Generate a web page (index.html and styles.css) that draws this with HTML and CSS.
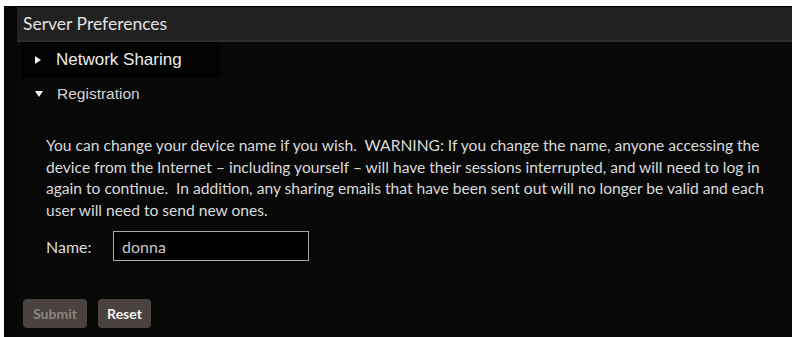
FILE: index.html
```html
<!DOCTYPE html>
<html>
<head>
<meta charset="utf-8">
<link rel="stylesheet" href="styles.css">
</head>
<body>
<div class="panel">
  <div class="header">Server Preferences</div>
  <div class="body">
    <div class="section section-closed">
      <span class="tri tri-right"></span>
      <span class="section-title">Network Sharing</span>
    </div>
    <div class="section section-open">
      <span class="tri tri-down"></span>
      <span class="section-title reg">Registration</span>
    </div>
    <div class="content">
      <p class="desc">You can change your device name if you wish.&nbsp; WARNING: If you change the name, anyone accessing the device from the Internet &ndash; including yourself &ndash; will have their sessions interrupted, and will need to log in again to continue.&nbsp; In addition, any sharing emails that have been sent out will no longer be valid and each user will need to send new ones.</p>
      <div class="field">
        <label class="field-label" for="name">Name:</label>
        <input class="field-input" id="name" type="text" value="donna">
      </div>
    </div>
    <div class="actions">
      <button class="btn btn-disabled" disabled>Submit</button>
      <button class="btn btn-reset">Reset</button>
    </div>
  </div>
</div>
</body>
</html>
```

FILE: styles.css
```css
html, body {
  margin: 0;
  padding: 0;
  background: #ffffff;
}
.panel {
  margin: 6px 3px 0 4px;
  height: 331px;
  background: #050505;
  border-left: 1px solid #000;
  padding-left: 12px;
  box-sizing: border-box;
  font-family: "Lato", "Open Sans", sans-serif;
  color: #dcdcdc;
}
.header {
  height: 33px;
  background: #212121;
  border-top: 1px solid #000;
  border-bottom: 2px solid #2c2c2c;
  padding-left: 6px;
  font-size: 17.5px;
  line-height: 33px;
  color: #e2e2e2;
  box-sizing: content-box;
}
.body {
  background: #080808;
  height: 295px;
}
.section {
  display: flex;
  align-items: center;
  font-family: "Liberation Sans", Arial, sans-serif;
}
.section-closed {
  width: 198px;
  height: 36px;
  margin-left: 5px;
  background: #020202;
}
.section-open {
  height: 32px;
  margin-left: 5px;
}
.tri {
  display: inline-block;
  width: 0;
  height: 0;
  margin-left: 13px;
}
.tri-right {
  border-top: 4.5px solid transparent;
  border-bottom: 4.5px solid transparent;
  border-left: 6px solid #f0f0f0;
  margin-right: 15px;
}
.tri-down {
  border-left: 4.5px solid transparent;
  border-right: 4.5px solid transparent;
  border-top: 6px solid #f0f0f0;
  margin-right: 14px;
}
.section-title {
  font-size: 17px;
  color: #ececec;
}
.section-title.reg {
  font-size: 15.5px;
  color: #d4d4d4;
}
.content {
  padding: 25px 0 0 29px;
}
.desc {
  margin: 0;
  width: 738px;
  font-size: 15.6px;
  line-height: 21.5px;
  color: #dadada;
}
.field {
  display: flex;
  align-items: center;
  margin-top: 10px;
}
.field-label {
  width: 67px;
  font-size: 16px;
  color: #dadada;
}
.field-input {
  width: 196px;
  height: 30px;
  box-sizing: border-box;
  background: #000;
  border: 1px solid #a8a8a8;
  padding: 0 8px;
  font-family: "Lato", "Open Sans", sans-serif;
  font-size: 16px;
  color: #c8c8c8;
  outline: none;
}
.actions {
  display: flex;
  gap: 11px;
  padding: 38px 0 0 6px;
}
.btn {
  height: 29px;
  border: none;
  border-radius: 4px;
  background: #4a423e;
  font-family: "Lato", "Open Sans", sans-serif;
  font-weight: bold;
  font-size: 14px;
  padding: 0;
}
.btn-disabled {
  width: 64px;
  color: #8a8480;
}
.btn-reset {
  width: 53px;
  color: #f4f4f4;
}
```
